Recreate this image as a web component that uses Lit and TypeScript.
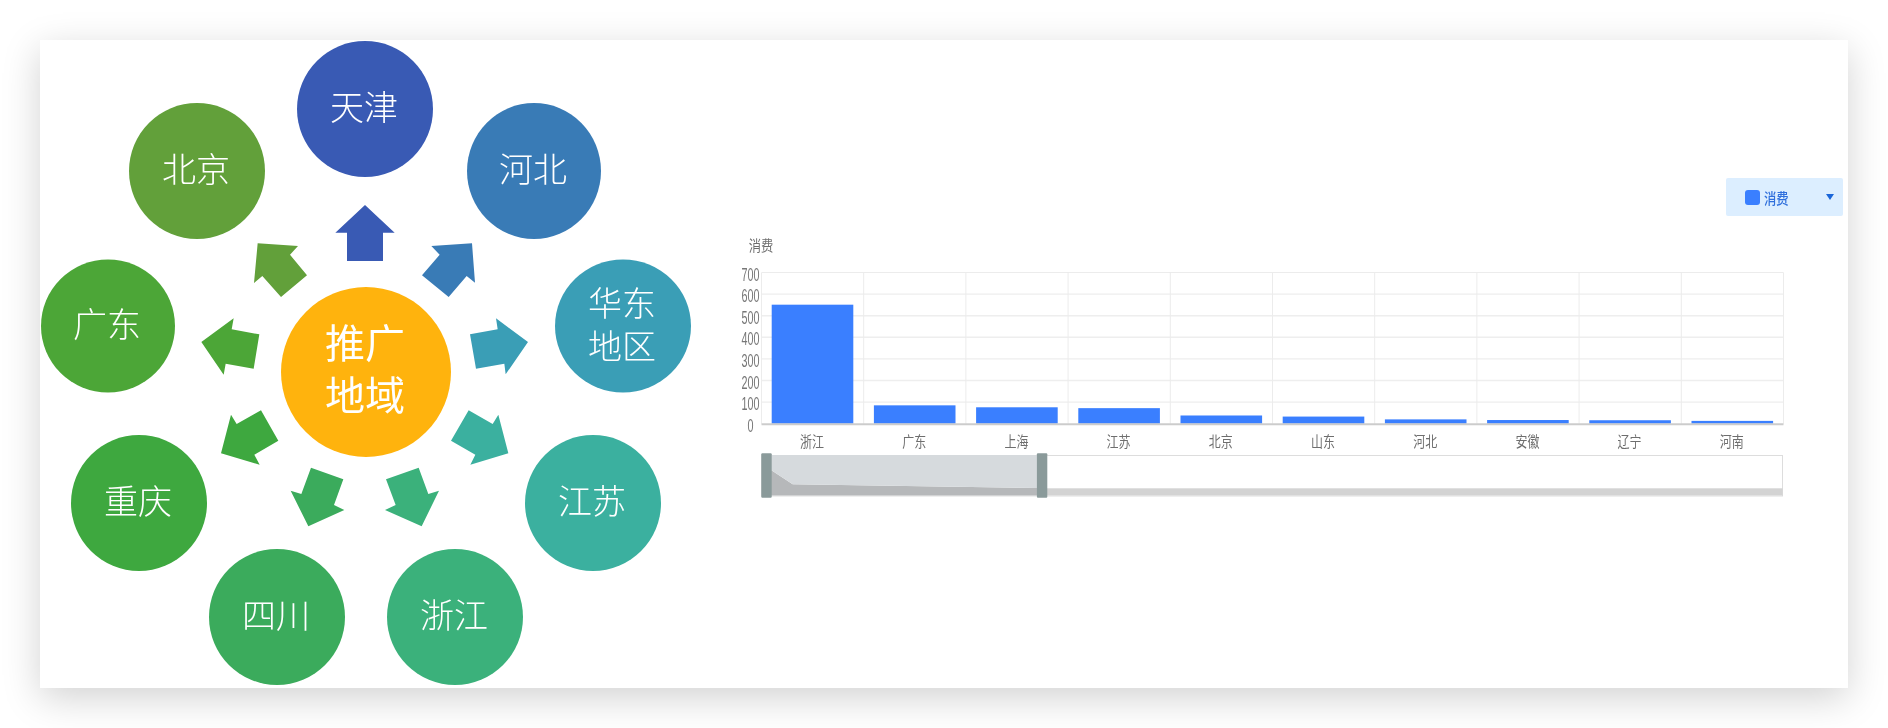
import { LitElement, html, svg, css, type TemplateResult } from "lit";
import { customElement } from "lit/decorators.js";

interface RegionNode {
  lines: string[];
  x: number;
  y: number;
  w: number;
  h: number;
  color: string;
}

// centre and box of each circle, relative to the diagram box
const NODES: RegionNode[] = [
  { lines: ["天津"], x: 325, y: 69, w: 136, h: 136, color: "#395ab4" },
  { lines: ["河北"], x: 494, y: 131, w: 134, h: 136, color: "#397bb6" },
  { lines: ["华东", "地区"], x: 583, y: 286, w: 136, h: 133, color: "#3a9eb6" },
  { lines: ["江苏"], x: 553, y: 463, w: 136, h: 136, color: "#3bb09f" },
  { lines: ["浙江"], x: 415, y: 577, w: 136, h: 136, color: "#3bb17b" },
  { lines: ["四川"], x: 237, y: 577, w: 136, h: 136, color: "#3bab5c" },
  { lines: ["重庆"], x: 99, y: 463, w: 136, h: 136, color: "#3ea83f" },
  { lines: ["广东"], x: 68, y: 286, w: 134, h: 133, color: "#4ca637" },
  { lines: ["北京"], x: 157, y: 131, w: 136, h: 136, color: "#62a03a" },
];

// arrow outlines, traced at 3x from x=180,y=190
const ARROWS: { color: string; pts: number[][] }[] = [
  { color: "#395ab4", pts: [[555, 45], [644, 128], [609, 128], [609, 213], [501, 213], [501, 128], [466, 128]] },
  { color: "#397bb6", pts: [[876, 160], [885, 278], [860, 258], [806, 321], [726, 256], [779, 194], [754, 168]] },
  { color: "#3a9eb6", pts: [[1044, 456], [977, 553], [973, 521], [888, 536], [870, 433], [953, 418], [948, 385]] },
  { color: "#3bb09f", pts: [[985, 790], [871, 824], [886, 794], [813, 752], [866, 661], [938, 702], [955, 674]] },
  { color: "#3bb17b", pts: [[725, 1009], [615, 960], [647, 945], [618, 868], [716, 833], [745, 912], [777, 902]] },
  { color: "#3bab5c", pts: [[385, 1009], [332, 902], [364, 912], [393, 833], [490, 868], [462, 945], [493, 960]] },
  { color: "#3ea83f", pts: [[123, 790], [153, 674], [170, 702], [243, 661], [295, 752], [223, 794], [239, 824]] },
  { color: "#4ca637", pts: [[64, 456], [161, 385], [155, 418], [238, 433], [221, 536], [137, 521], [131, 554]] },
  { color: "#62a03a", pts: [[233, 160], [354, 168], [330, 194], [381, 256], [303, 321], [247, 258], [222, 279]] },
];

const arrowPoints = (pts: number[][]) =>
  pts.map(([x, y]) => `${x / 3 + 140},${y / 3 + 150}`).join(" ");

@customElement("region-diagram")
export class RegionDiagram extends LitElement {
  static styles = css`
    :host {
      display: block;
      position: relative;
      width: 700px;
      height: 648px;
      flex: none;
      filter: blur(0.3px);
    }

    svg {
      position: absolute;
      left: 0;
      top: 0;
    }

    .node {
      position: absolute;
      transform: translate(-50%, -50%);
      border-radius: 50%;
      display: flex;
      flex-direction: column;
      align-items: center;
      justify-content: center;
      padding: 0 2px 2px 0;
      box-sizing: border-box;
      color: #fff;
      font-family: "Liberation Sans", "Noto Sans CJK SC", sans-serif;
      font-size: 34px;
      font-weight: 300;
    }

    .node span {
      display: block;
      height: 43px;
      line-height: 43px;
    }

    .hub {
      width: 170px;
      height: 170px;
      background: #ffb30d;
      font-size: 40px;
      font-weight: 400;
      padding-bottom: 5px;
    }

    .hub span {
      height: 52px;
      line-height: 52px;
    }
  `;

  render(): TemplateResult {
    return html`
      <svg width="700" height="648" viewBox="0 0 700 648">
        ${ARROWS.map(
          (a) => svg`<polygon points=${arrowPoints(a.pts)} fill=${a.color}></polygon>`
        )}
      </svg>
      ${NODES.map(
        (n) => html`
          <div
            class="node"
            style="left:${n.x}px;top:${n.y}px;width:${n.w}px;height:${n.h}px;background:${n.color}"
          >
            ${n.lines.map((l) => html`<span>${l}</span>`)}
          </div>
        `
      )}
      <div class="node hub" style="left:326px;top:332px">
        <span>推广</span><span>地域</span>
      </div>
    `;
  }
}

const BARS: [string, number][] = [
  ["浙江", 551],
  ["广东", 85],
  ["上海", 76],
  ["江苏", 72],
  ["北京", 38],
  ["山东", 33],
  ["河北", 20],
  ["安徽", 17],
  ["辽宁", 16],
  ["河南", 13],
];

// plot box inside the chart svg
const LEFT = 21.5;
const TOP = 42.5;
const COL = 102.2;
const ROW = 21.6;
const BASE = TOP + ROW * 7;

@customElement("spend-chart")
export class SpendChart extends LitElement {
  static styles = css`
    :host {
      display: block;
      filter: blur(0.35px);
    }

    svg {
      display: block;
    }

    .grid {
      stroke: #ececec;
      stroke-width: 1;
    }

    .grid-h {
      stroke: #eeeeee;
      stroke-width: 1.4;
    }

    text {
      fill: #6e6e6e;
      text-anchor: middle;
    }

    .num {
      fill: #777;
      font-family: "Liberation Sans", sans-serif;
      font-size: 18px;
    }

    .cat {
      font-size: 15px;
    }
  `;

  private label(x: number, y: number, sx: number, cls: string, s: string | number) {
    return svg`<text class=${cls} transform="translate(${x} ${y}) scale(${sx} 1)">${s}</text>`;
  }

  render(): TemplateResult {
    const w = COL * 10;
    const h = ROW * 7;
    const sliderRight = 1042.6;
    return html`
      <svg width="1108" height="280" viewBox="0 0 1108 280">
        ${this.label(21, 21, 0.82, "cat", "消费")}

        ${[1, 2, 3, 4, 5, 6].map(
          (i) => svg`<line class="grid-h" x1=${LEFT} x2=${LEFT + w} y1=${TOP + ROW * i} y2=${TOP + ROW * i}></line>`
        )}
        <line class="grid" x1=${LEFT} x2=${LEFT + w} y1=${TOP} y2=${TOP}></line>
        ${[0, 1, 2, 3, 4, 5, 6, 7, 8, 9, 10].map(
          (i) => svg`<line class="grid" x1=${LEFT + COL * i} x2=${LEFT + COL * i} y1=${TOP} y2=${BASE}></line>`
        )}

        ${[0, 100, 200, 300, 400, 500, 600, 700].map((v, i) =>
          this.label(LEFT - 11, BASE + 8 - ROW * i, 0.6, "num", v)
        )}

        ${BARS.map(([, v], i) => {
          const bh = (v / 700) * h;
          return svg`<rect x=${LEFT + COL * i + 10.2} y=${BASE - bh} width="81.6" height=${bh} fill="#3a7fff"></rect>`;
        })}
        <line x1=${LEFT} x2=${LEFT + w} y1=${BASE + 0.5} y2=${BASE + 0.5} stroke="#cccccc" stroke-width="2"></line>

        ${BARS.map(([name], i) =>
          this.label(LEFT + COL * i + COL / 2 - 0.6, 217, 0.8, "cat", name)
        )}

        <!-- zoom slider -->
        <rect x="21.5" y="225.5" width="1021" height="40.5" fill="#fff" stroke="#dddddd"></rect>
        <path d="M31 240 L52.7 254.3 L297 258 L297 265.5 L31 265.5 Z" fill="#b6b8ba"></path>
        <rect x="297" y="258.3" width=${sliderRight - 297} height="7.2" fill="#d3d3d3"></rect>
        <path d="M31 225 H297 V258 L52.7 254.3 L31 240 Z" fill="#d6dadd"></path>
        <rect x="21.3" y="223.3" width="10.4" height="44.4" rx="1" fill="#8a9a9a"></rect>
        <rect x="296.9" y="223.3" width="10.4" height="44.4" rx="1" fill="#8a9a9a"></rect>
      </svg>
    `;
  }
}

@customElement("app-root")
export class AppRoot extends LitElement {
  static styles = css`
    :host {
      display: block;
      width: 1888px;
      height: 728px;
      padding: 40px;
      box-sizing: border-box;
      overflow: hidden;
      background: #fff;
      font-family: "Noto Sans CJK SC", "Liberation Sans", sans-serif;
    }

    .card {
      display: flex;
      height: 648px;
      background: #fff;
      box-shadow: 0 10px 36px rgba(0, 0, 0, 0.18);
    }

    .panel {
      flex: 1;
      display: flex;
      flex-direction: column;
      padding-top: 138px;
    }

    .legend {
      align-self: flex-end;
      margin-right: 5px;
      width: 117px;
      height: 38px;
      box-sizing: border-box;
      padding: 0 9px 0 19px;
      display: flex;
      align-items: center;
      background: #dceeff;
      border-radius: 2px;
      color: #2f6fdc;
      font-size: 15px;
      font-weight: 500;
    }

    .swatch {
      width: 15px;
      height: 15px;
      margin-right: 4px;
      border-radius: 3px;
      background: #3a7fff;
    }

    .name {
      transform: scaleX(0.82);
      transform-origin: left center;
      flex: 1;
    }

    .caret {
      width: 0;
      height: 0;
      border-left: 4px solid transparent;
      border-right: 4px solid transparent;
      border-top: 6px solid #1a66d9;
    }

    spend-chart {
      margin-top: 14px;
    }
  `;

  render(): TemplateResult {
    return html`
      <div class="card">
        <region-diagram></region-diagram>
        <div class="panel">
          <div class="legend">
            <span class="swatch"></span>
            <span class="name">消费</span>
            <span class="caret"></span>
          </div>
          <spend-chart></spend-chart>
        </div>
      </div>
    `;
  }
}
